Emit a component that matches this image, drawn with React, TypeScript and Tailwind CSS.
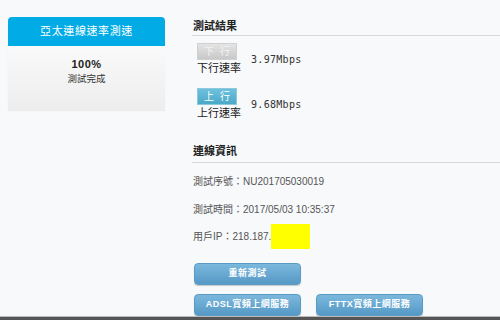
const cjk = '"Liberation Sans", "Noto Sans CJK TC", sans-serif';
const mono = '"DejaVu Sans Mono", "Noto Sans CJK TC", monospace';

function SpeedRow({ badge, label, value, active }: { badge: string; label: string; value: string; active?: boolean }) {
  return (
    <div className="flex items-center">
      <div className="flex flex-col items-start">
        <div
          className={`flex h-[17px] w-[40px] items-center justify-center gap-[6px] border text-[10px] leading-none ${
            active
              ? 'border-[#8fc8dc] bg-gradient-to-b from-[#6ec1dc] to-[#4aa9c9] text-white'
              : 'border-[#d0d0d0] bg-gradient-to-b from-[#e4e4e4] to-[#c8c8c8] text-[#f4f4f4]'
          }`}
        >
          {badge.split(' ').map((c) => (
            <span key={c}>{c}</span>
          ))}
        </div>
        <div className="mt-[1px] whitespace-nowrap text-[11px] leading-[15px] text-[#222]">{label}</div>
      </div>
      <div className="ml-[10px] text-[10px] tracking-[0.3px] text-[#333]" style={{ fontFamily: mono }}>
        {value}
      </div>
    </div>
  );
}

function BlueButton({ children }: { children: React.ReactNode }) {
  return (
    <button className="h-[22px] w-[107px] shrink-0 rounded-[4px] border border-[#5b9bc6] bg-gradient-to-b from-[#7cb8dd] to-[#5599c6] text-[9px] font-bold leading-none tracking-[0.5px] text-white shadow-[0_1px_1px_rgba(0,0,0,0.2)]">
      {children}
    </button>
  );
}

export default function App() {
  return (
    <div className="flex h-[320px] w-[500px] flex-col overflow-hidden bg-[#f8f9fb]" style={{ fontFamily: cjk }}>
      <div className="flex h-[316px] shrink-0 pt-[17px]">
        <div className="ml-[8px] w-[157px]">
          <div className="flex h-[29px] items-center justify-center rounded-t-[4px] bg-[#00abe6] text-[11px] tracking-[0.6px] text-white">
            亞太連線速率測速
          </div>
          <div className="flex h-[64px] flex-col items-center bg-gradient-to-b from-[#fafafa] to-[#ededed] pt-[11px] shadow-[0_1px_1px_rgba(0,0,0,0.05)]">
            <div className="text-[11px] font-bold leading-[14px] tracking-[0.5px] text-[#222]">100%</div>
            <div className="mt-[1px] text-[9.5px] leading-[14px] text-[#333]">測試完成</div>
          </div>
        </div>

        <div className="ml-[27px] flex-1">
          <div className="border-b border-[#d8d8d8] pb-[1px] pl-[1px] pt-[2px] text-[11px] font-bold leading-[15px] text-[#222]">測試結果</div>
          <div className="ml-[5px] mt-[7px] flex flex-col gap-[12px]">
            <SpeedRow badge="下 行" label="下行速率" value="3.97Mbps" />
            <SpeedRow badge="上 行" label="上行速率" value="9.68Mbps" active />
          </div>

          <div className="mt-[23px] border-b border-[#d8d8d8] pb-[3px] pl-[1px] text-[11px] font-bold leading-[15px] text-[#222]">連線資訊</div>
          <div className="ml-[1px] text-[10px] leading-[15px] text-[#555]">
            <div className="mt-[11px]">測試序號：NU201705030019</div>
            <div className="mt-[13px]">測試時間：2017/05/03 10:35:37</div>
            <div className="mt-[7px] flex h-[25px] items-center">
              用戶IP：218.187.
              <span className="inline-block h-[25px] w-[39px] bg-[#ffff00]" />
            </div>
          </div>
          <div className="ml-[2px] mt-[10px]">
            <BlueButton>重新測試</BlueButton>
          </div>
          <div className="ml-[2px] mt-[9px] flex gap-[15px]">
            <BlueButton>ADSL寬頻上網服務</BlueButton>
            <BlueButton>FTTX寬頻上網服務</BlueButton>
          </div>
        </div>
      </div>
      <div className="h-[4px] border-t border-[#bbb] bg-[#555]" />
    </div>
  );
}
